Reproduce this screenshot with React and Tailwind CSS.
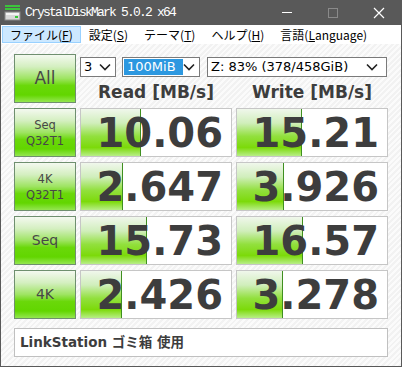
import React from 'react';

const ROWS = [
  { label: ['Seq', 'Q32T1'], read: '10.06', write: '15.21', rw: 60, ww: 65 },
  { label: ['4K', 'Q32T1'], read: '2.647', write: '3.926', rw: 42, ww: 47 },
  { label: ['Seq'], read: '15.73', write: '16.57', rw: 66, ww: 66, big: true },
  { label: ['4K'], read: '2.426', write: '3.278', rw: 41, ww: 46, big: true }
];

const MENUS = [
  { text: 'ファイル', key: 'F', active: true },
  { text: '設定', key: 'S' },
  { text: 'テーマ', key: 'T' },
  { text: 'ヘルプ', key: 'H' },
  { text: '言語', key: 'L', rest: 'anguage' }
];

function Chevron() {
  return (
    <svg width="12" height="8" viewBox="0 0 12 8" className="shrink-0">
      <polyline points="1,1.5 6,6.5 11,1.5" fill="none" stroke="#222" strokeWidth="1.6" />
    </svg>
  );
}

function GreenButton({ children, className = '' }) {
  return (
    <div
      className={`flex flex-col items-center justify-center border border-[#6f8f6f] bg-[linear-gradient(to_bottom,#f4f9f0_0%,#d4efc0_25%,#9ee462_50%,#6ad80a_65%,#62d600_85%,#94e650_100%)] text-[#474747] font-['DejaVu_Sans',sans-serif] ${className}`}
    >
      {children}
    </div>
  );
}

function ResultCell({ value, width }) {
  return (
    <div className="relative flex items-center justify-end border border-[#c6c6c6] bg-white pr-[8px]">
      <div
        className="absolute left-0 top-0 bottom-0 border-r border-[#3f8f20] bg-[linear-gradient(to_bottom,#f0f7ec_0%,#d0eebb_30%,#92e03e_58%,#7cda0a_82%,#b8ee88_100%)]"
        style={{ width }}
      />
      <span className="relative text-[40px] leading-none font-bold text-[#3d3d3d] font-['DejaVu_Sans',sans-serif]">
        {value}
      </span>
    </div>
  );
}

function AppIcon() {
  return (
    <svg width="17" height="17" viewBox="0 0 17 17">
      <rect x="1" y="1" width="15" height="2" fill="#3cc43c" />
      <rect x="1" y="4" width="15" height="2" fill="#3cc43c" />
      <rect x="1" y="8" width="15" height="8" fill="#d8d8d8" stroke="#8a8a8a" />
      <rect x="2" y="9" width="13" height="2" fill="#f4f4f4" />
      <rect x="11" y="12" width="3" height="2" fill="#35c835" />
    </svg>
  );
}

export default function App() {
  return (
    <div className="w-[402px] h-[367px] flex flex-col overflow-hidden bg-[#595959]">
      <div className="h-[25px] flex items-center text-white">
        <div className="pl-[4px] pr-[4px]">
          <AppIcon />
        </div>
        <span className="text-[13px] tracking-[-1.8px] font-['Liberation_Mono',monospace]">
          CrystalDiskMark 5.0.2 x64
        </span>
        <div className="ml-auto flex items-center h-full">
          <div className="w-[46px] h-full flex items-center justify-center">
            <div className="w-[10px] h-px bg-white" />
          </div>
          <div className="w-[46px] h-full flex items-center justify-center">
            <div className="w-[10px] h-[10px] border border-[#8a8a8a]" />
          </div>
          <div className="w-[46px] h-full flex items-center justify-center">
            <svg width="12" height="12" viewBox="0 0 12 12">
              <path d="M1 1 L11 11 M11 1 L1 11" stroke="#fff" strokeWidth="1.2" />
            </svg>
          </div>
        </div>
      </div>

      <div className="h-[19px] mx-px bg-white flex items-center text-[12px] text-black font-['Noto_Sans_CJK_JP',sans-serif]">
        {MENUS.map((m) => (
          <div
            key={m.key}
            className={`h-[17px] flex items-center px-[7px] border ${
              m.active ? 'ml-px bg-[#cce8ff] border-[#99d1ff]' : 'border-transparent'
            }`}
          >
            {m.text}(<span className="underline">{m.key}</span>
            {m.rest || ''})
          </div>
        ))}
      </div>

      <div className="flex-1 mx-px mb-px bg-[repeating-linear-gradient(135deg,#f2f2f2_0px,#f2f2f2_2px,#fbfbfb_2px,#fbfbfb_4px)] pl-[13px] pt-[10px]">
        <div className="grid grid-cols-[62px_152px_152px] auto-rows-[49px] gap-x-[4px] gap-y-[5px]">
          <GreenButton>
            <span className="text-[17px]">All</span>
          </GreenButton>
          <div className="col-span-2 flex flex-col">
            <div className="flex items-center h-[20px] mt-[3px] text-[13px] text-black font-['DejaVu_Sans',sans-serif]">
              <div className="w-[36px] h-full flex items-center justify-between border border-[#7a7a7a] bg-white pl-[3px] pr-[4px]">
                <span>3</span>
                <Chevron />
              </div>
              <div className="ml-[6px] w-[78px] h-full flex items-center justify-between border border-[#7a7a7a] bg-white pl-[1px] pr-[4px]">
                <span className="h-[16px] w-[59px] flex items-center bg-[#2c98e0] text-white pl-[3px]">100MiB</span>
                <Chevron />
              </div>
              <div className="ml-[7px] w-[180px] h-full flex items-center justify-between border border-[#7a7a7a] bg-white pl-[3px] pr-[8px]">
                <span>Z: 83% (378/458GiB)</span>
                <Chevron />
              </div>
            </div>
            <div className="grid grid-cols-2 gap-x-[4px] mt-[5px] text-[17px] leading-[20px] font-bold text-[#3d3d3d] font-['DejaVu_Sans',sans-serif]">
              <div className="text-center">Read [MB/s]</div>
              <div className="text-center">Write [MB/s]</div>
            </div>
          </div>

          {ROWS.map((r) => (
            <React.Fragment key={r.read}>
              <GreenButton>
                {r.big ? (
                  <span className="text-[14px]">{r.label[0]}</span>
                ) : (
                  r.label.map((t) => (
                    <span key={t} className="text-[11.5px] leading-[16px]">
                      {t}
                    </span>
                  ))
                )}
              </GreenButton>
              <ResultCell value={r.read} width={r.rw} />
              <ResultCell value={r.write} width={r.ww} />
            </React.Fragment>
          ))}
        </div>

        <div className="mt-[9px] w-[374px] h-[29px] flex items-center border border-[#c0c0c0] bg-white pl-[5px] text-[13.5px] font-bold text-[#3d3d3d] font-['DejaVu_Sans','Noto_Sans_CJK_JP',sans-serif]">
          LinkStation ゴミ箱 使用
        </div>
      </div>
    </div>
  );
}
